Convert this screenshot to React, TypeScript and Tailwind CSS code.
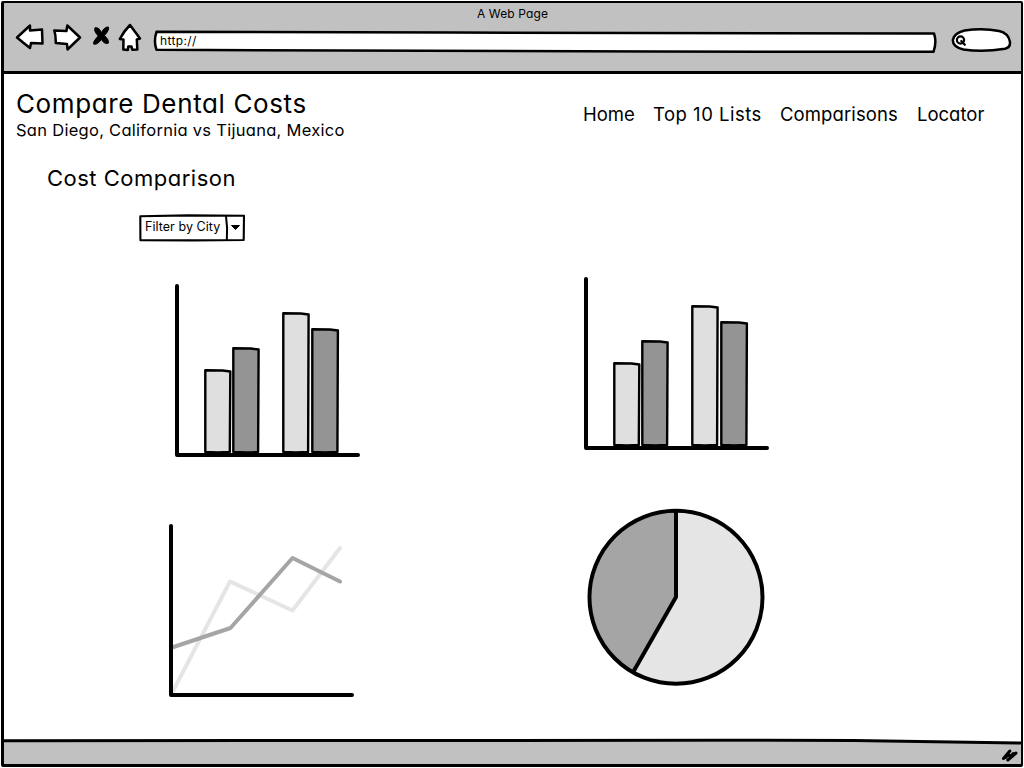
import type { ReactNode } from 'react';

const stroke = { stroke: '#000', strokeWidth: 2.5, strokeLinejoin: 'round' as const, strokeLinecap: 'round' as const };

function BackIcon() {
  return (
    <svg className="block h-[30px] w-[30px]" viewBox="0 0 30 30">
      <path d="M2 14.5 L15 2.5 L15 7.5 L27 6.5 L27.5 20.5 L16 20 L15 25 Q8.5 20 2 14.5 Z" fill="#fff" {...stroke} />
    </svg>
  );
}

function ForwardIcon() {
  return (
    <svg className="block h-[30px] w-[30px]" viewBox="0 0 30 30">
      <path d="M1.3 7.5 L13.5 8 L14.3 2.5 L27 14.5 L14.5 26.5 L14 21 L2.7 20 Q3 13 1.3 7.5 Z" fill="#fff" {...stroke} />
    </svg>
  );
}

function StopIcon() {
  return (
    <svg className="block h-[22px] w-[20px]" viewBox="0 0 20 22">
      <path d="M4.2 2.5 Q8 2 10.5 7.5 Q13.5 1.5 17.5 2 Q18.5 5 13.5 10.5 Q18.3 15 17.5 18 Q14 20 10.3 14.5 Q6.5 20 2.8 19.2 Q1.5 17 7.2 11 Q2.2 5.5 4.2 2.5 Z" fill="#000" stroke="#000" strokeWidth="1" strokeLinejoin="round" />
    </svg>
  );
}

function HomeIcon() {
  return (
    <svg className="block h-[30px] w-[24px]" viewBox="0 0 24 30">
      <path d="M12 2 L22 15.5 L18.8 16.5 L19.3 26.5 L14.3 26.8 L13.5 23.5 L10.3 23.5 L9.8 27 L5.3 26.5 L5.5 16.5 L1.8 16 Q6 8 12 2 Z" fill="#fff" {...stroke} />
    </svg>
  );
}

function BrowserBar() {
  return (
    <header className="flex h-[69px] shrink-0 flex-col bg-[#c1c1c1]">
      <div className="h-[20px] pt-[3px] text-center text-[12px] leading-[16px] tracking-[0.12px]">
        A Web Page
      </div>
      <div className="flex h-[30px] items-start pl-[11px]">
        <BackIcon />
        <div className="ml-[8px]"><ForwardIcon /></div>
        <div className="ml-[8px] mt-[2px]"><StopIcon /></div>
        <div className="ml-[7px]"><HomeIcon /></div>
        <div className="relative ml-[11px] mt-[6px] h-[24px] w-[786px]">
          <svg className="absolute inset-0 h-full w-full" viewBox="0 0 786 24">
            <path d="M3.5 2.8 L300 3.6 L781 4.5 Q784 13 780.5 22.8 L500 22.6 L3.5 20.8 Q.4 12 3.5 2.8 Z" fill="#fff" {...stroke} />
          </svg>
          <div className="relative pl-[7px] pt-[4px] text-[12px] leading-[16px] tracking-[0.35px]">http://</div>
        </div>
        <svg className="ml-[12px] mt-[2px] block h-[28px] w-[64px]" viewBox="0 0 64 28">
          <path d="M13.5 5.5 Q32 2.6 48 6 Q57.5 8 59 17 Q59.5 22.5 54 23.7 Q32 27.5 12.5 24.5 Q1.8 22 1.8 15 Q3 8 13.5 5.5 Z" fill="#fff" {...stroke} />
          <circle cx="9.5" cy="15" r="3.6" fill="none" stroke="#000" strokeWidth="2.2" />
          <path d="M10.3 16 L13.8 19.8" stroke="#000" strokeWidth="2.2" strokeLinecap="round" />
        </svg>
      </div>
    </header>
  );
}

function BarChart() {
  const bars = [
    { x: 30.3, y: 87.5, w: 24.7, fill: '#dfdfdf' },
    { x: 58.3, y: 65.5, w: 25, fill: '#949494' },
    { x: 108.3, y: 30.5, w: 25, fill: '#dfdfdf' },
    { x: 137.3, y: 46.5, w: 25.3, fill: '#949494' },
  ];
  return (
    <svg className="block h-[176px] w-[188px]" viewBox="0 0 188 176">
      {bars.map((b) => (
        <path
          key={b.x}
          d={`M${b.x} ${b.y - 0.2} L${b.x + b.w * 0.7} ${b.y} L${b.x + b.w + 0.3} ${b.y + 1} L${b.x + b.w - 0.2} 169 Q${b.x + b.w / 2} 170 ${b.x} 169 Z`}
          fill={b.fill}
          {...stroke}
          strokeWidth={2.4}
        />
      ))}
      <path d="M2 3 V172 H183" fill="none" stroke="#000" strokeWidth="4" strokeLinecap="round" strokeLinejoin="round" />
    </svg>
  );
}

function LineChart() {
  return (
    <svg className="block h-[176px] w-[188px]" viewBox="0 0 188 176">
      <g fill="none" strokeWidth="4" strokeLinecap="round" strokeLinejoin="round">
        <path d="M3 170 L61 58.5 L123.5 87.5 L171 25" stroke="#e5e5e5" />
        <path d="M3 124.5 L61.5 105 L123.5 35 L171 58.5" stroke="#a5a5a5" />
        <path d="M2 3 V172 H183" stroke="#000" />
      </g>
    </svg>
  );
}

function PieChart() {
  return (
    <svg className="block h-[180px] w-[180px]" viewBox="0 0 180 180">
      <circle cx="90" cy="90.3" r="86.5" fill="#e5e5e5" />
      <path d="M90 90 L47.5 164.5 A86.5 86.5 0 0 1 90 3.8 Z" fill="#a5a5a5" />
      <circle cx="90" cy="90.3" r="86.5" fill="none" stroke="#000" strokeWidth="4" />
      <path d="M90 4 V90 L47.5 164.5" fill="none" stroke="#000" strokeWidth="4" strokeLinejoin="round" />
    </svg>
  );
}

function NavLink({ children, className }: { children: ReactNode; className: string }) {
  return <a className={`whitespace-nowrap ${className}`}>{children}</a>;
}

function CityFilter() {
  return (
    <button className="relative ml-[134px] mt-[21px] flex h-[28px] w-[108px] items-start text-left">
      <svg className="absolute inset-0 h-full w-full" viewBox="0 0 108 28">
        <path d="M2.3 2.2 L50 1.4 L106 1.8 L105.7 26 L55 26.4 L2.4 26.2 Z" fill="#fff" {...stroke} strokeWidth={2.1} />
        <path d="M88 2.2 Q89.8 14 88.8 26" fill="none" stroke="#000" strokeWidth="2" />
        <path d="M93.5 11.5 h8 l-4 4 Z" fill="#000" stroke="#000" strokeLinejoin="round" />
      </svg>
      <span className="relative pl-[7px] pt-[5px] text-[12.5px] leading-[16px] tracking-[0.05px] whitespace-nowrap">Filter by City</span>
    </button>
  );
}

export default function App() {
  return (
    <div className="h-[768px] w-[1024px] overflow-hidden bg-white pl-[1px] pr-[1px] pt-[1px] font-['Inter',sans-serif] text-black [font-feature-settings:'cv11','calt'_0]">
      <div className="flex h-[766px] flex-col rounded-[2px] border-2 border-b-[3px] border-l-[3px] border-black">
        <BrowserBar />
        <main className="relative -mt-px flex min-h-0 flex-1 flex-col border-t-[3px] border-black bg-white">
          <div className="flex justify-between">
            <div className="pl-[12px] pt-[14px]">
              <h1 className="text-[26px] leading-[32px] tracking-[0.62px] whitespace-nowrap">Compare Dental Costs</h1>
              <p className="text-[16.5px] leading-[20px] tracking-[0.28px] whitespace-nowrap">San Diego, California vs Tijuana, Mexico</p>
            </div>
            <nav className="flex w-[438px] pt-[28px] text-[18.5px] leading-[24px]">
              <NavLink className="w-[70px]">Home</NavLink>
              <NavLink className="w-[127px] tracking-[0.5px]">Top 10 Lists</NavLink>
              <NavLink className="w-[137px] tracking-[0.1px]">Comparisons</NavLink>
              <NavLink className="">Locator</NavLink>
            </nav>
          </div>
          <h2 className="ml-[43px] mt-[23px] text-[22px] leading-[30px] tracking-[0.5px] whitespace-nowrap">Cost Comparison</h2>
          <CityFilter />
          <div className="grid grid-cols-[409px_1fr] pl-[171px]">
            <div className="pt-[41px]"><BarChart /></div>
            <div className="pt-[34px]"><BarChart /></div>
            <div className="-ml-[6px] pt-[64px]"><LineChart /></div>
            <div className="pl-[2px] pt-[48px]"><PieChart /></div>
          </div>
        </main>
        <footer className="relative flex h-[22px] shrink-0 justify-end bg-[#c1c1c1]">
          <svg className="absolute -top-[4px] left-0 h-[8px] w-full" viewBox="0 0 1018 8" preserveAspectRatio="none">
            <path d="M0 0 H1018 V5 L900 2 H0 Z" fill="#fff" />
            <path d="M0 2.7 L720 2.3 L850 2.5 L1018 5" fill="none" stroke="#000" strokeWidth="3" />
          </svg>
          <svg className="relative mr-[2px] mt-[5px] block h-[16px] w-[20px]" viewBox="0 0 20 16">
            <path d="M4.5 11.5 L10.8 4 M6.5 10.5 L9.5 7.5 M8.8 13 L17 6 M11 9.5 L14.5 6.5" fill="none" stroke="#000" strokeWidth="3" strokeLinecap="round" />
          </svg>
        </footer>
      </div>
    </div>
  );
}
